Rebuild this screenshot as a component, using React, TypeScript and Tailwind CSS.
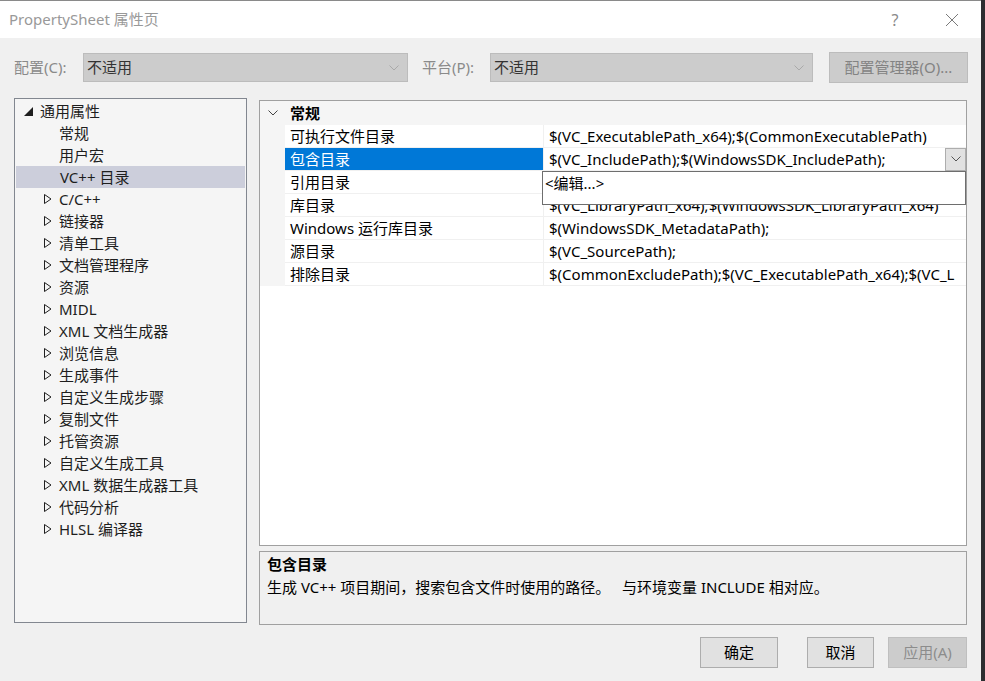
import React from 'react'

const font = { fontFamily: '"Noto Sans", "Noto Sans CJK SC", sans-serif' }

const treeChildren = [
  'C/C++',
  '链接器',
  '清单工具',
  '文档管理程序',
  '资源',
  'MIDL',
  'XML 文档生成器',
  '浏览信息',
  '生成事件',
  '自定义生成步骤',
  '复制文件',
  '托管资源',
  '自定义生成工具',
  'XML 数据生成器工具',
  '代码分析',
  'HLSL 编译器',
]

// value of 引用目录 is hidden under the open drop-down
const props = [
  ['可执行文件目录', '$(VC_ExecutablePath_x64);$(CommonExecutablePath)'],
  ['包含目录', '$(VC_IncludePath);$(WindowsSDK_IncludePath);'],
  ['引用目录', ''],
  ['库目录', '$(VC_LibraryPath_x64);$(WindowsSDK_LibraryPath_x64)'],
  ['Windows 运行库目录', '$(WindowsSDK_MetadataPath);'],
  ['源目录', '$(VC_SourcePath);'],
  ['排除目录', '$(CommonExcludePath);$(VC_ExecutablePath_x64);$(VC_L'],
]

function Chevron({ className = '' }: { className?: string }) {
  return (
    <svg className={className} width="10" height="6" viewBox="0 0 10 6" fill="none">
      <path d="M0.5 0.5L5 5L9.5 0.5" stroke="currentColor" strokeWidth="1" />
    </svg>
  )
}

function Combo({ width }: { width: string }) {
  return (
    <div className={`${width} h-[29px] bg-[#cccccc] border border-[#bcbcbc] flex items-center pl-[3px] pr-[8px]`}>
      <span className="flex-1 text-[#333] text-[15px]">不适用</span>
      <Chevron className="text-[#a9a9a9]" />
    </div>
  )
}

function TreeArrow() {
  return (
    <svg width="8" height="10" viewBox="0 0 8 10" className="shrink-0">
      <path d="M0.5 0.5L7 5L0.5 9.5Z" fill="none" stroke="#1e1e1e" strokeWidth="1" />
    </svg>
  )
}

export default function App() {
  return (
    <div className="w-[985px] h-[681px] flex overflow-hidden bg-[#2d2d30]" style={font}>
      <div className="w-[981px] h-full flex flex-col bg-[#f0f0f0] border-t border-[#8a8a8a]">
        {/* Title bar */}
        <div className="h-[37px] bg-white flex items-center pl-[9px] shrink-0">
          <span className="flex-1 text-[15px] text-[#999999]">PropertySheet 属性页</span>
          <span className="text-[16px] text-[#8a8a8a] w-[14px] text-center mr-[43px]">?</span>
          <svg width="14" height="14" viewBox="0 0 14 14" className="mr-[22px]">
            <path d="M1 1L13 13M13 1L1 13" stroke="#7a7a7a" strokeWidth="1" />
          </svg>
        </div>

        {/* Config row */}
        <div className="h-[31px] mt-[14px] flex items-center pl-[14px] shrink-0">
          <span className="w-[69px] text-[15px] text-[#8a8a8a]">配置(C):</span>
          <Combo width="w-[325px]" />
          <span className="w-[82px] pl-[14px] text-[15px] text-[#8a8a8a]">平台(P):</span>
          <Combo width="w-[323px]" />
          <div className="ml-[16px] w-[139px] h-[31px] bg-[#cccccc] border border-[#bcbcbc] flex items-center justify-center text-[15px] text-[#838383]">
            配置管理器(O)...
          </div>
        </div>

        {/* Main area */}
        <div className="flex mt-[15px] pl-[14px] shrink-0">
          {/* Tree */}
          <div className="w-[233px] h-[525px] border border-[#828790] bg-[#f5f5f5] pt-[1px] text-[15px] text-[#1e1e1e]">
            <div className="h-[22px] flex items-center pl-[9px]">
              <svg width="9" height="9" viewBox="0 0 9 9" className="mr-[7px]">
                <path d="M9 0L9 9L0 9Z" fill="#1e1e1e" />
              </svg>
              <span>通用属性</span>
            </div>
            <div className="h-[22px] flex items-center pl-[44px]">常规</div>
            <div className="h-[22px] flex items-center pl-[44px]">用户宏</div>
            <div className="h-[22px] flex items-center pl-[44px] bg-[#cccedb] mx-[1px]">VC++ 目录</div>
            {treeChildren.map((t) => (
              <div key={t} className="h-[22px] flex items-center pl-[29px]">
                <TreeArrow />
                <span className="ml-[7px]">{t}</span>
              </div>
            ))}
          </div>

          {/* Right column */}
          <div className="ml-[12px] w-[708px] flex flex-col">
            {/* Property grid */}
            <div className="relative mt-[2px] h-[446px] border border-[#a0a0a0] bg-white text-[15px] text-black">
              <div className="h-[24px] bg-[#f5f5f5] flex items-center">
                <div className="w-[25px] flex justify-center">
                  <Chevron className="text-[#444]" />
                </div>
                <span className="font-bold pl-[5px]">常规</span>
              </div>
              {props.map(([name, value], i) => (
                <div key={name} className="h-[23px] flex bg-[#f5f5f5]">
                  <div className="w-[25px]" />
                  <div
                    className={`w-[258px] flex items-center pl-[5px] border-b border-[#f0f0f0] whitespace-nowrap ${
                      i === 1 ? 'bg-[#0078d7] text-white' : 'bg-white'
                    }`}
                  >
                    {name}
                  </div>
                  <div className="flex-1 min-w-0 flex items-center pl-[5px] bg-white border-l border-b border-[#f0f0f0] whitespace-nowrap">
                    <span className="flex-1 min-w-0 overflow-hidden">{value}</span>
                    {i === 1 && (
                      <div className="w-[21px] h-[23px] bg-[#e1e1e1] border border-[#adadad] flex items-center justify-center shrink-0">
                        <Chevron className="text-[#555]" />
                      </div>
                    )}
                  </div>
                </div>
              ))}
              {/* Drop-down popup */}
              <div className="absolute left-[282px] top-[70px] w-[424px] h-[34px] bg-white border border-[#6e6e6e] border-t-dotted border-r-dotted pl-[2px]">
                &lt;编辑...&gt;
              </div>
            </div>

            {/* Description */}
            <div className="mt-[5px] h-[74px] border border-[#a0a0a0] bg-[#f0f0f0] px-[7px] text-[15px] text-black">
              <div className="font-bold h-[24px] flex items-center">包含目录</div>
              <div className="h-[22px] flex items-center whitespace-pre">生成 VC++ 项目期间，搜索包含文件时使用的路径。   与环境变量 INCLUDE 相对应。</div>
            </div>
          </div>
        </div>

        {/* Buttons */}
        <div className="flex justify-end mt-[12px] pr-[14px] gap-[29px] text-[15px] shrink-0">
          <div className="w-[78px] h-[31px] bg-[#e1e1e1] border border-[#adadad] flex items-center justify-center text-black">确定</div>
          <div className="flex gap-[14px]">
            <div className="w-[67px] h-[31px] bg-[#e1e1e1] border border-[#adadad] flex items-center justify-center text-black">取消</div>
            <div className="w-[79px] h-[31px] bg-[#cccccc] border border-[#bfbfbf] flex items-center justify-center text-[#8c8c8c]">应用(A)</div>
          </div>
        </div>
      </div>
      <div className="flex-1 bg-[#2d2d30]" />
    </div>
  )
}
